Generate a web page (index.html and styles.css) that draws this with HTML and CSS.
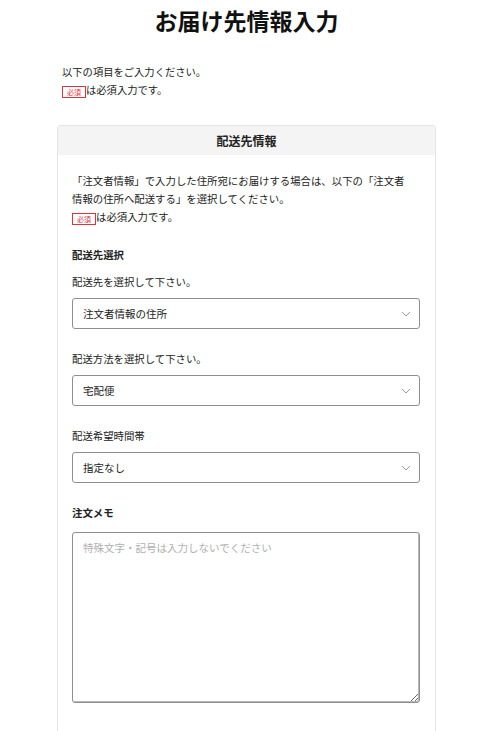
FILE: index.html
```html
<!DOCTYPE html>
<html lang="ja">
<head>
<meta charset="utf-8">
<meta name="viewport" content="width=device-width, initial-scale=1">
<title>お届け先情報入力</title>
<link rel="stylesheet" href="styles.css">
</head>
<body>

<div class="page">
  <h1 class="page-title">お届け先情報入力</h1>

  <div class="intro">
    <p>以下の項目をご入力ください。</p>
    <p><span class="required">必須</span>は必須入力です。</p>
  </div>

  <section class="card">
    <h2 class="card-head">配送先情報</h2>

    <div class="card-body">
      <p class="note">「注文者情報」で入力した住所宛にお届けする場合は、以下の「注文者情報の住所へ配送する」を選択してください。<br>
      <span class="required">必須</span>は必須入力です。</p>

      <h3 class="group-title">配送先選択</h3>

      <label class="field-label" for="dest">配送先を選択して下さい。</label>
      <div class="select-wrap">
        <select id="dest" class="select">
          <option>注文者情報の住所</option>
        </select>
        <svg class="chevron" width="10" height="6" viewBox="0 0 10 6"><path d="M1 1l4 4 4-4" fill="none" stroke="#9a9a9a" stroke-width="1"/></svg>
      </div>

      <label class="field-label spaced" for="method">配送方法を選択して下さい。</label>
      <div class="select-wrap">
        <select id="method" class="select">
          <option>宅配便</option>
        </select>
        <svg class="chevron" width="10" height="6" viewBox="0 0 10 6"><path d="M1 1l4 4 4-4" fill="none" stroke="#9a9a9a" stroke-width="1"/></svg>
      </div>

      <label class="field-label spaced" for="time">配送希望時間帯</label>
      <div class="select-wrap">
        <select id="time" class="select">
          <option>指定なし</option>
        </select>
        <svg class="chevron" width="10" height="6" viewBox="0 0 10 6"><path d="M1 1l4 4 4-4" fill="none" stroke="#9a9a9a" stroke-width="1"/></svg>
      </div>

      <h3 class="group-title memo-title">注文メモ</h3>
      <textarea class="memo" placeholder="特殊文字・記号は入力しないでください"></textarea>
    </div>
  </section>
</div>

</body>
</html>
```

FILE: styles.css
```css
body {
  margin: 0;
  font-family: "Noto Sans CJK JP", "Noto Sans", sans-serif;
  color: #222;
  background-color: #fff;
}

p {
  margin: 0;
}

.page {
  width: 379px;
  margin-left: 57px;
}

.page-title {
  margin: 4px 0 0;
  font-size: 23px;
  line-height: 32px;
  font-weight: bold;
  text-align: center;
  color: #111;
}

.intro {
  margin-top: 27px;
  padding-left: 5px;
  font-size: 10.3px;
  line-height: 18px;
}

.required {
  display: inline-block;
  box-sizing: border-box;
  width: 24px;
  height: 12px;
  border: 1px solid #e0323c;
  color: #e0323c;
  font-size: 7px;
  line-height: 10px;
  text-align: center;
  vertical-align: -1px;
}

.card {
  margin-top: 26px;
  border: 1px solid #e4e4e4;
  border-bottom: none;
  border-radius: 4px 4px 0 0;
  min-height: 620px;
}

.card-head {
  margin: 0;
  height: 29px;
  line-height: 29px;
  background-color: #f4f4f4;
  font-size: 12px;
  font-weight: bold;
  text-align: center;
  border-radius: 4px 4px 0 0;
}

.card-body {
  padding: 17px 15px 0 14px;
  display: flex;
  flex-direction: column;
}

.note {
  padding-right: 8px;
  font-size: 10.4px;
  line-height: 18px;
}

.group-title {
  margin: 20px 0 0;
  font-size: 10.4px;
  line-height: 18px;
  font-weight: bold;
}

.field-label {
  margin-top: 9px;
  font-size: 10.4px;
  line-height: 18px;
}

.field-label.spaced {
  margin-top: 21px;
}

.select-wrap {
  position: relative;
  margin-top: 7px;
}

.select {
  appearance: none;
  -webkit-appearance: none;
  box-sizing: border-box;
  width: 100%;
  height: 31px;
  padding: 0 30px 0 10px;
  border: 1px solid #8f8f8f;
  border-radius: 3px;
  background-color: #fff;
  font: inherit;
  font-size: 10.5px;
  color: #222;
}

.chevron {
  position: absolute;
  right: 9px;
  top: 13px;
}

.memo-title {
  margin-top: 21px;
}

.memo {
  box-sizing: border-box;
  width: 100%;
  height: 171px;
  margin-top: 10px;
  padding: 7px 10px;
  border: 1px solid #8f8f8f;
  border-radius: 3px;
  box-shadow: inset -1px -1px 0 #b8b8b8;
  font: inherit;
  font-size: 10.5px;
  line-height: 16px;
  resize: vertical;
}

.memo::placeholder {
  color: #b0b0b0;
}
```
